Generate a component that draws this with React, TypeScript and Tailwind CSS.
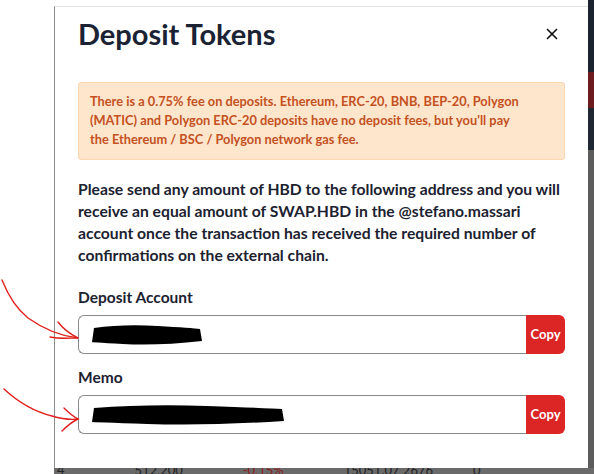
import { X } from "lucide-react";

const font = { fontFamily: "Lato, 'Open Sans', sans-serif" };

function Scribble({ width }: { width: number }) {
  return (
    <svg width={width} height="26" viewBox={`0 0 ${width} 26`} className="shrink-0">
      <path
        d={`M6 6 Q ${width * 0.3} 2 ${width * 0.6} 4 T ${width - 4} 7 L ${width - 2} 19 Q ${width * 0.6} 24 ${width * 0.3} 22 T 4 20 Z`}
        fill="#000"
      />
    </svg>
  );
}

function CopyField({ scribble }: { scribble: number }) {
  return (
    <div className="flex h-[39px] w-[487px]">
      <div className="flex flex-1 items-center rounded-l-md border border-r-0 border-[#8a8a8a] pl-[9px]">
        <Scribble width={scribble} />
      </div>
      <button
        type="button"
        className="w-[39px] rounded-r-md bg-[#dc2626] text-[13px] font-bold text-white"
      >
        Copy
      </button>
    </div>
  );
}

export default function App() {
  return (
    <div className="relative flex h-[474px] w-[594px] overflow-hidden bg-white" style={font}>
      <div className="w-[54px] shrink-0" />

      <div className="flex flex-1 flex-col">
        <div className="flex flex-1">
          <div className="flex w-[534px] flex-col pt-[6px]">
            <div className="flex flex-1 flex-col rounded-br-md border-l border-t border-l-[#8c8c8c] border-t-[#e2e2e2] bg-white px-[23px]">
              <div className="flex h-[54px] items-center justify-between">
                <h1 className="text-[29px] font-bold text-[#1a2233]">Deposit Tokens</h1>
                <X size={18} strokeWidth={2.2} className="mr-[4px] text-[#111]" />
              </div>

              <div className="mt-[21px] rounded-[3px] border border-[#fbd7b1] bg-[#fee6cd] px-[11px] pt-[9px] pb-[10px] text-[12.8px] leading-[19px] font-bold text-[#c4511e]">
                <div>There is a 0.75% fee on deposits. Ethereum, ERC-20, BNB, BEP-20, Polygon</div>
                <div>(MATIC) and Polygon ERC-20 deposits have no deposit fees, but you'll pay</div>
                <div>the Ethereum / BSC / Polygon network gas fee.</div>
              </div>

              <div className="mt-[18px] text-[15.7px] leading-[22px] font-bold text-[#1c2230]">
                <div>Please send any amount of HBD to the following address and you will</div>
                <div>receive an equal amount of SWAP.HBD in the @stefano.massari</div>
                <div>account once the transaction has received the required number of</div>
                <div>confirmations on the external chain.</div>
              </div>

              <div className="mt-[20px] text-[15.5px] leading-[22px] font-bold text-[#1c2230]">Deposit Account</div>
              <div className="mt-[7px]">
                <CopyField scribble={116} />
              </div>

              <div className="mt-[12px] text-[15.5px] leading-[22px] font-bold text-[#1c2230]">Memo</div>
              <div className="mt-[7px]">
                <CopyField scribble={198} />
              </div>
            </div>
          </div>

          <div className="flex w-[6px] flex-col">
            <div className="h-[72px] bg-[#1b2230]" />
            <div className="h-[36px] bg-[#6e1b1f]" />
            <div className="h-[42px] bg-[#1f2733]" />
            <div className="flex-1 bg-[#5c5c5c]" />
          </div>
        </div>

        <div className="flex h-[6px] items-start overflow-hidden bg-[#6a6a6a] text-[13px] leading-[13px] text-[#222]">
          <span className="ml-[3px] -mt-[4px]">4</span>
          <span className="ml-[70px] -mt-[4px]">512,200</span>
          <span className="ml-[60px] -mt-[4px] text-[#8b1c1c]">-0.15%</span>
          <span className="ml-[60px] -mt-[4px]">15051.07 2676</span>
          <span className="ml-[40px] -mt-[4px]">0</span>
        </div>
      </div>

      <svg className="pointer-events-none absolute left-0 top-0" width="100" height="474" viewBox="0 0 100 474">
        <g fill="none" stroke="#e0201c" strokeWidth="1.4" strokeLinecap="round">
          <path d="M2 280 C 10 300, 18 310, 28 318 C 45 330, 60 336, 78 338" />
          <path d="M58 322 C 64 330, 70 334, 78 338 C 70 338, 60 339, 50 337" />
          <path d="M4 389 C 18 402, 36 412, 52 416 C 62 419, 70 420, 78 419" />
          <path d="M64 408 C 68 412, 72 416, 78 419 C 72 422, 66 427, 62 431" />
        </g>
      </svg>
    </div>
  );
}
